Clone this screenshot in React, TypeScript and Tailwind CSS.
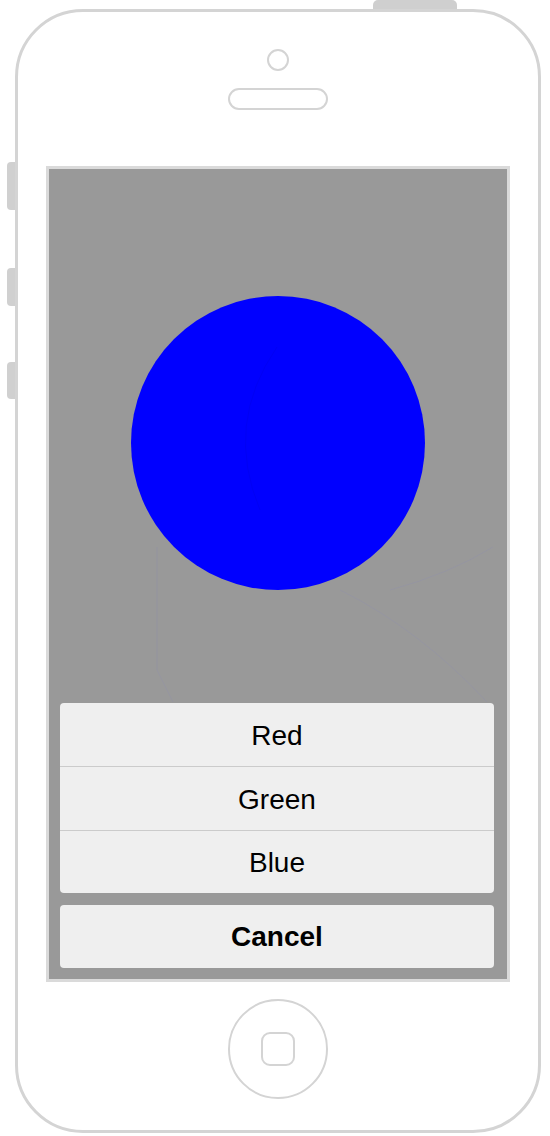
import React from 'react';

const options = ['Red', 'Green', 'Blue'];

function SideButton({ top, height }: { top: string; height: string }) {
  return <div className={`absolute left-[7px] w-[9px] rounded-l-[4px] bg-[#d0d0d0] ${top} ${height}`} />;
}

function ActionSheet() {
  return (
    <div className="relative flex flex-col gap-[12px] pb-[11px] pl-[11px] pr-[13px]">
      <div className="flex flex-col overflow-hidden rounded-[4px] bg-[#efefef]">
        {options.map((label, i) => (
          <div
            key={label}
            className={`flex h-[63.5px] items-center justify-center pt-[3px] text-[28px] text-black ${
              i > 0 ? 'border-t border-[#cbcbcb]' : ''
            }`}
          >
            {label}
          </div>
        ))}
      </div>
      <div className="flex h-[63px] items-center justify-center rounded-[4px] bg-[#efefef] pt-[1px] text-[28px] font-bold text-black">
        Cancel
      </div>
    </div>
  );
}

export default function App() {
  return (
    <div
      className="relative h-[1136px] w-[550px] overflow-hidden bg-white"
      style={{ fontFamily: '"Liberation Sans", Arial, sans-serif' }}
    >
      {/* hardware buttons */}
      <div className="absolute left-[373px] top-0 h-[10px] w-[84px] rounded-t-[5px] bg-[#cfcfcf]" />
      <SideButton top="top-[162px]" height="h-[48px]" />
      <SideButton top="top-[268px]" height="h-[38px]" />
      <SideButton top="top-[362px]" height="h-[37px]" />

      {/* phone body */}
      <div className="relative ml-[15px] mt-[9px] flex h-[1124px] w-[526px] flex-col items-center rounded-[68px] border-[3px] border-[#d4d4d4] bg-white">
        <div className="mt-[37px] h-[22px] w-[22px] rounded-full border-2 border-[#d4d4d4]" />
        <div className="mt-[17px] h-[22px] w-[100px] rounded-full border-2 border-[#d4d4d4]" />

        {/* screen */}
        <div className="mt-[56px] h-[816px] w-[464px] border-[3px] border-[#dadada]">
          <div className="relative flex h-full flex-col bg-[#999999]">
            <div className="mx-auto mt-[127px] h-[294px] w-[294px] rounded-full bg-[#0000ff]" />
            <svg className="pointer-events-none absolute left-0 top-0" width="458" height="810" fill="none">
              <path d="M228 178 Q 175 255 211 341" stroke="#0000c8" strokeOpacity="0.2" />
              <path d="M108 378 L 108 501 L 124 533" stroke="#8080c8" strokeOpacity="0.15" />
              <path d="M444 378 Q 400 405 341 421" stroke="#8080c8" strokeOpacity="0.15" />
              <path d="M291 421 Q 370 460 438 533" stroke="#8080c8" strokeOpacity="0.15" />
            </svg>
            <div className="flex-1" />
            <ActionSheet />
          </div>
        </div>

        {/* home button */}
        <div className="mt-[17px] flex h-[100px] w-[100px] items-center justify-center rounded-full border-2 border-[#d4d4d4]">
          <div className="h-[34px] w-[34px] rounded-[9px] border-2 border-[#d4d4d4]" />
        </div>
      </div>
    </div>
  );
}
